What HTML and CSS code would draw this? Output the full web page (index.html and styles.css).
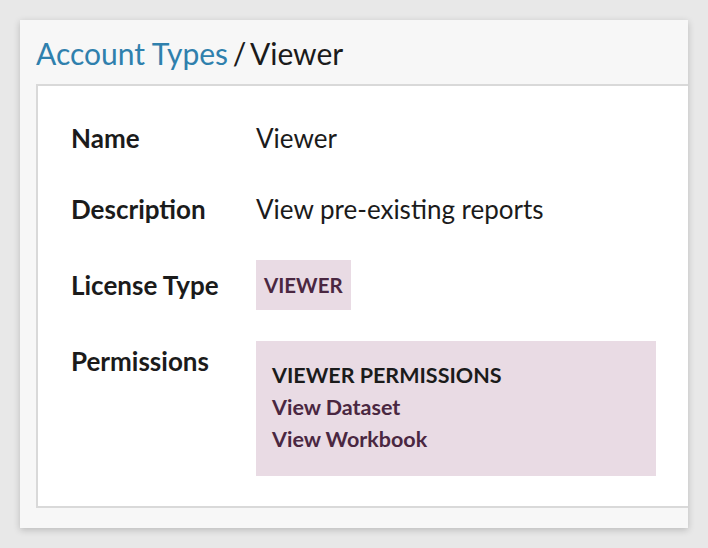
FILE: index.html
```html
<!DOCTYPE html>
<html>
<head>
<meta charset="utf-8">
<link rel="stylesheet" href="styles.css">
</head>
<body>
<div class="card">
  <h1 class="title"><a class="crumb" href="#">Account Types</a> / Viewer</h1>
  <div class="panel">
    <div class="grid">
      <div class="label">Name</div>
      <div class="value">Viewer</div>
      <div class="label">Description</div>
      <div class="value">View pre-existing reports</div>
      <div class="label">License Type</div>
      <div class="value"><span class="badge">VIEWER</span></div>
      <div class="label label-top">Permissions</div>
      <div class="value">
        <div class="perms">
          <div class="perms-head">VIEWER PERMISSIONS</div>
          <div class="perm">View Dataset</div>
          <div class="perm">View Workbook</div>
        </div>
      </div>
    </div>
  </div>
</div>
</body>
</html>
```

FILE: styles.css
```css
html, body {
  margin: 0;
  padding: 0;
}
body {
  background: #e8e8e8;
  padding: 20px;
  font-family: "Lato", "Open Sans", sans-serif;
  color: #1b1b1b;
}
.card {
  width: 668px;
  height: 508px;
  box-sizing: border-box;
  background: #f7f7f7;
  box-shadow: 0 2px 7px rgba(0,0,0,0.2);
  padding: 13px 0 0 16px;
  overflow: hidden;
}
.title {
  margin: 0 0 11px 0;
  font-size: 30px;
  line-height: 40px;
  font-weight: 400;
  color: #1b1b1b;
  word-spacing: -3px;
}
.crumb {
  color: #2f80ad;
  text-decoration: none;
  word-spacing: 0;
}
.panel {
  background: #fff;
  border: 2px solid #d9d9d9;
  border-right: none;
  height: 424px;
  box-sizing: border-box;
  padding: 32px 0 0 33px;
}
.grid {
  display: grid;
  grid-template-columns: 185px 400px;
  row-gap: 31px;
  align-items: center;
}
.label {
  font-weight: 700;
  font-size: 26px;
  line-height: 40px;
}
.label-top {
  align-self: start;
}
.value {
  font-size: 26px;
  line-height: 40px;
}
.badge {
  display: inline-block;
  background: #e9dbe4;
  color: #4a2741;
  font-weight: 700;
  font-size: 20.5px;
  line-height: 50px;
  padding: 0 8px;
  vertical-align: top;
}
.perms {
  background: #e9dbe4;
  padding: 18px 16px 21px;
  font-size: 21.5px;
  line-height: 32px;
  font-weight: 700;
  color: #4a2741;
}
.perms-head {
  color: #1b1b1b;
}
```
